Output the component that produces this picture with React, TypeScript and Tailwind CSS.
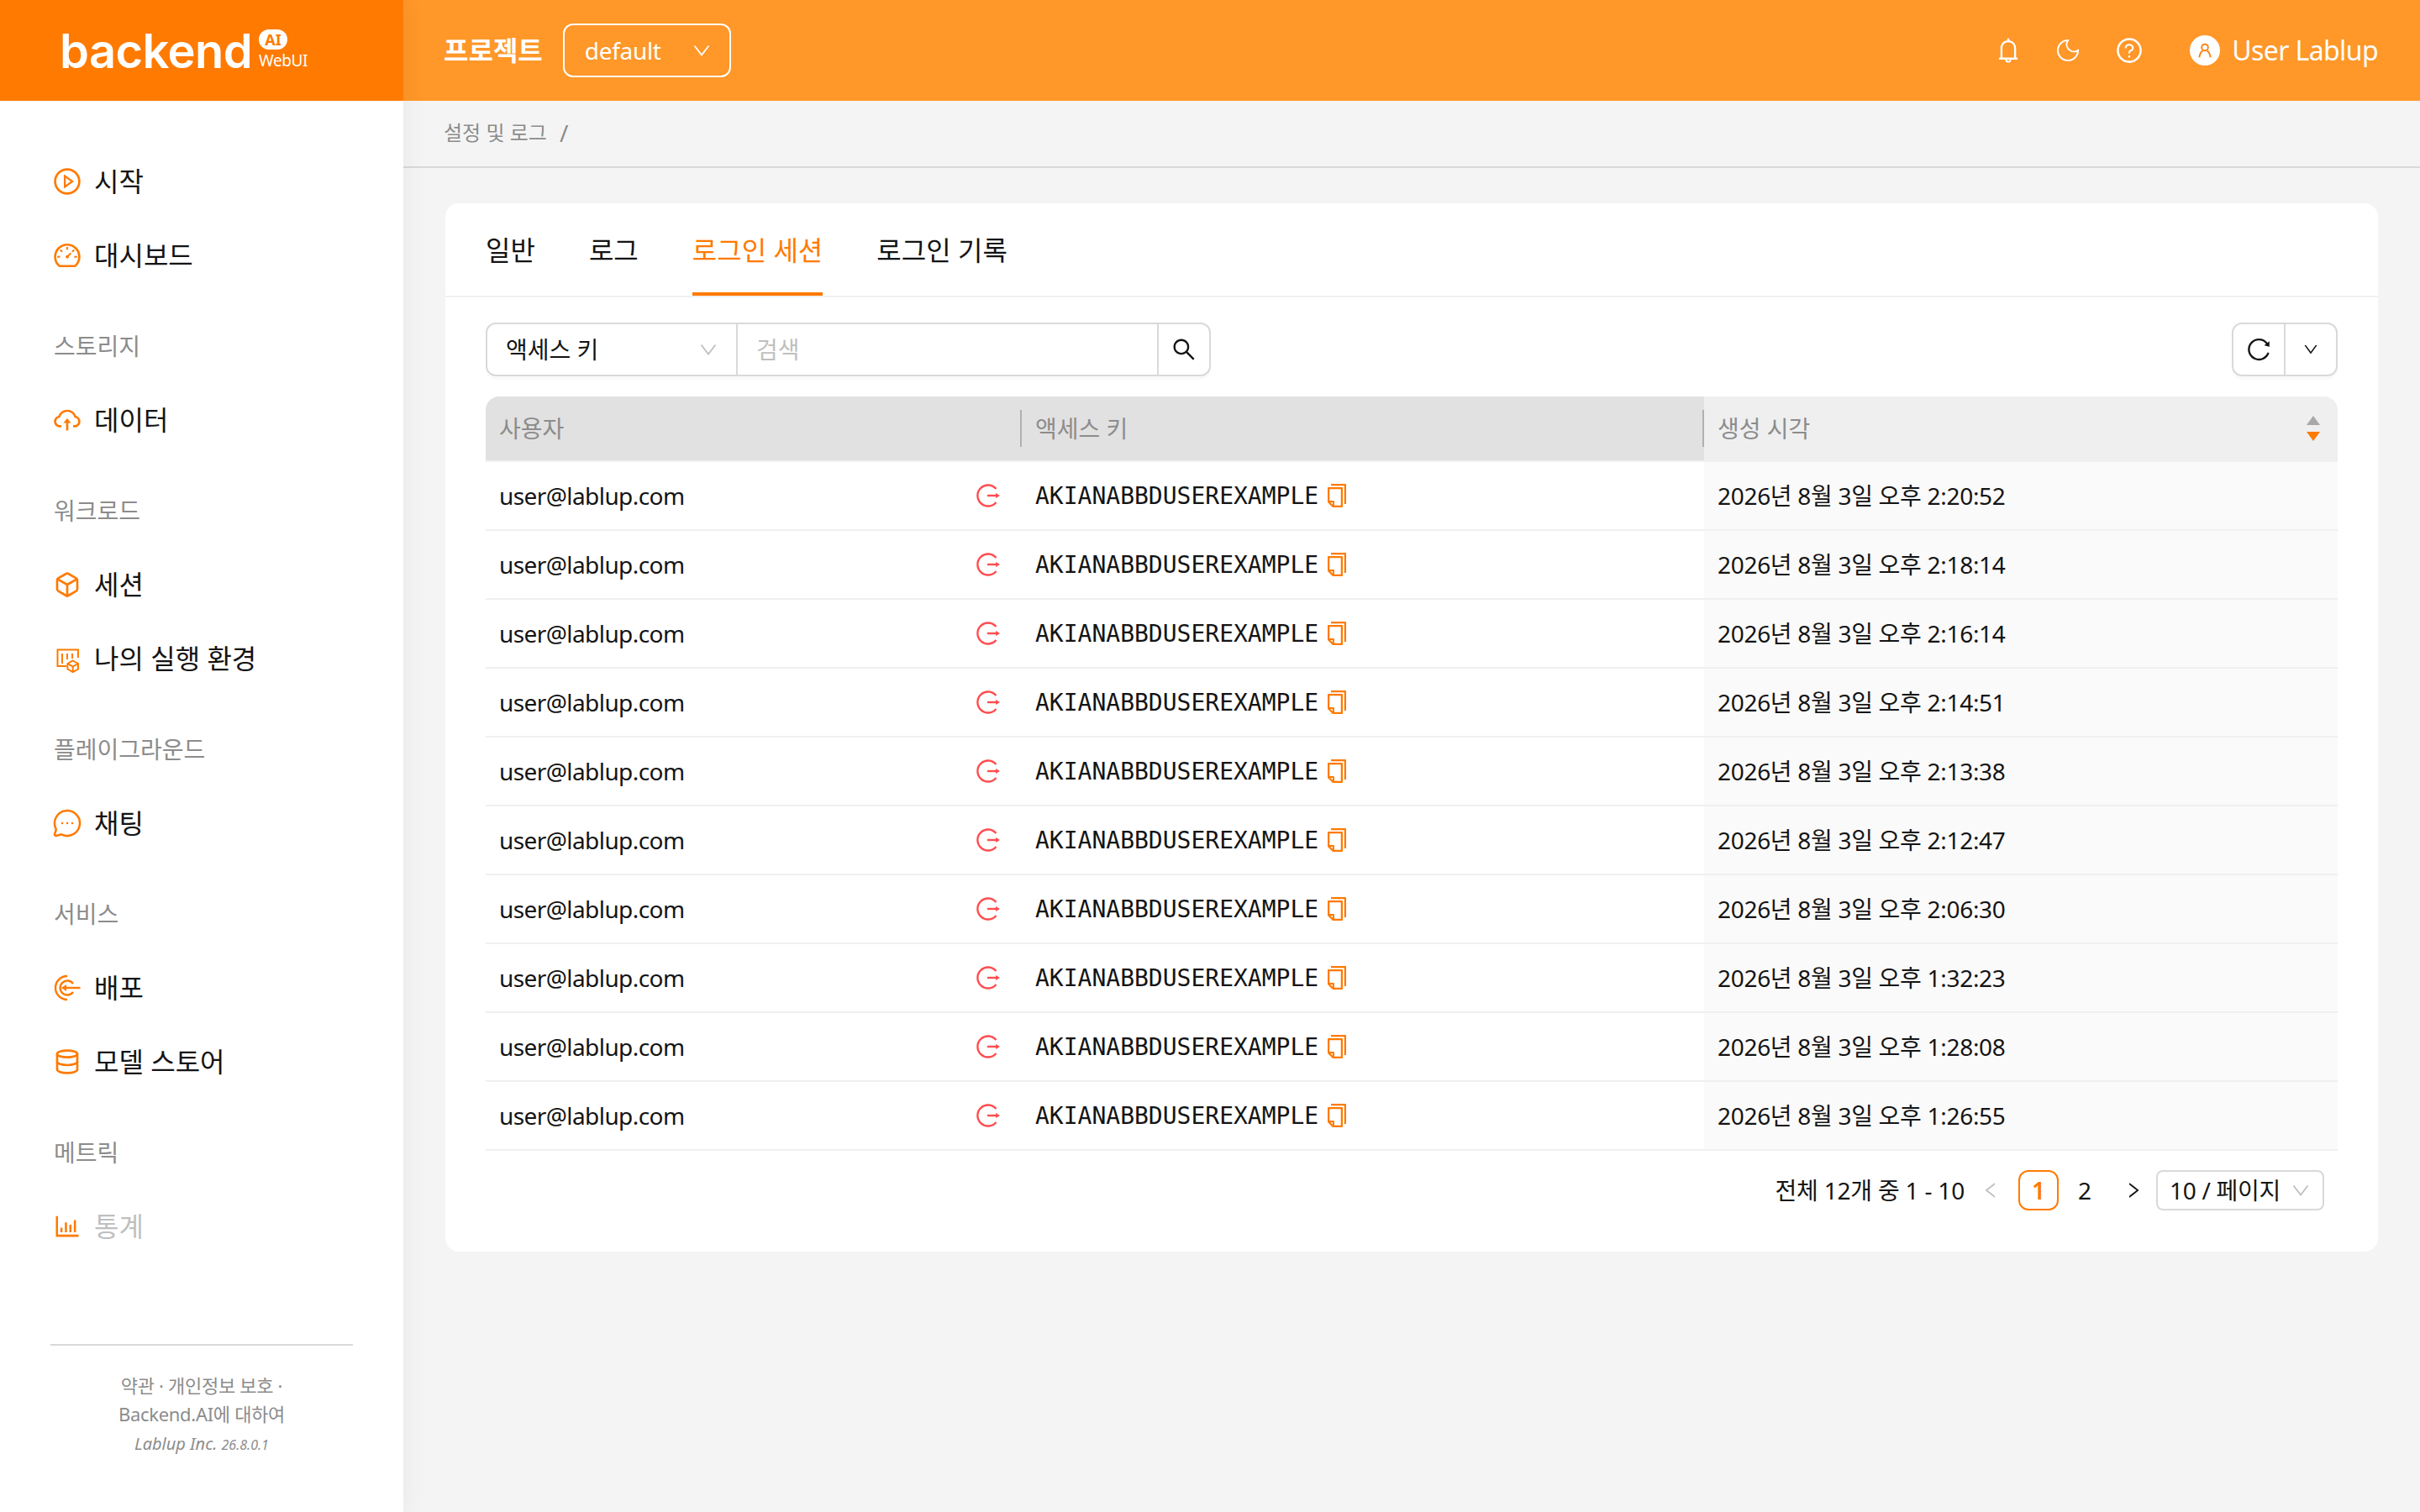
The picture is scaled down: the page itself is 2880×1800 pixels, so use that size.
import type { ReactNode } from "react";
import { Box, Database, MessageCircleMore } from "lucide-react";
import {
  AiOutlineBarChart,
  AiOutlineBell,
  AiOutlineCloudUpload,
  AiOutlineCopy,
  AiOutlineDashboard,
  AiOutlineDown,
  AiOutlineLeft,
  AiOutlinePlayCircle,
  AiOutlineQuestionCircle,
  AiOutlineReload,
  AiOutlineRight,
  AiOutlineSearch,
} from "react-icons/ai";

const times = [
  "2:20:52", "2:18:14", "2:16:14", "2:14:51", "2:13:38",
  "2:12:47", "2:06:30", "1:32:23", "1:28:08", "1:26:55",
];

function Chevron({ color = "#bfbfbf" }: { color?: string }) {
  return (
    <svg viewBox="0 0 22 14" className="w-[22px] h-[14px]" fill="none" stroke={color} strokeWidth="1.800">
      <path d="M2.500 1.500 11 12.500 19.500 1.500" />
    </svg>
  );
}

function EnvIcon() {
  return (
    <svg viewBox="0 0 32 32" className="w-8 h-8 overflow-visible" fill="none" stroke="#ff7a00" strokeWidth="2">
      <path d="M15 25H4.500V5.500H29V15" />
      <path d="M10 10v12M16 10v7M22 10v6" />
      <path d="M22.700 18.500l6.300 3.500v6.500l-6.300 3.500-6.300-3.500V22z" />
      <path d="M16.400 22l6.300 3.500L29 22M22.700 25.500V32" />
    </svg>
  );
}

function DeployIcon() {
  return (
    <svg viewBox="0 0 32 32" className="w-8 h-8" fill="none" stroke="#ff7a00" strokeWidth="2.400">
      <path d="M16 2A14 14 0 0 0 16 30" />
      <path d="M23 11A8.500 8.500 0 1 0 23 21" />
      <path d="M31.500 16H13" />
      <path d="M15 12l-6 4 6 4z" fill="#ff7a00" strokeWidth="0" />
    </svg>
  );
}

function LogoutIcon() {
  return (
    <svg viewBox="0 0 32 32" className="w-8 h-8" fill="none" stroke="#ff4d4f" strokeWidth="2.400">
      <path d="M25.500 8A12.500 12.500 0 1 0 25.500 24" />
      <path d="M15 16h13" />
      <path d="M25 13l5 3-5 3z" fill="#ff4d4f" strokeWidth="0" />
    </svg>
  );
}

function MoonIcon() {
  return (
    <svg viewBox="0 0 24 24" className="w-8 h-8" fill="none" stroke="#fff" strokeWidth="1.500">
      <path d="M12 3a6.500 6.500 0 0 0 9 9 9 9 0 1 1-9-9Z" />
    </svg>
  );
}

function NavItem({ icon, label, muted }: { icon: ReactNode; label: string; muted?: boolean }) {
  return (
    <div className="h-20 mb-2 pl-16 flex items-center">
      <span className="w-8 h-8 flex items-center justify-center text-[36px] text-[#ff7a00] [&>svg]:shrink-0">{icon}</span>
      <span className={"ml-4 text-[32px] " + (muted ? "text-[#bfbfbf]" : "text-[#141414]")}>{label}</span>
    </div>
  );
}

function NavLabel({ children }: { children: ReactNode }) {
  return <div className="h-20 mb-2 mt-7 pl-16 flex items-center text-[28px] text-[#8c8c8c]">{children}</div>;
}

function Sidebar() {
  return (
    <aside className="w-[480px] shrink-0 h-full bg-white flex flex-col z-10 shadow-[0_0_30px_rgba(0,0,0,0.06)]">
      <div className="h-[120px] bg-[#ff7a00] shrink-0 flex items-center pl-[71px] text-white">
        <span className="text-[56px] leading-none font-semibold tracking-[-0.6px] font-['Inter',sans-serif] mt-[2px]">backend</span>
        <div className="ml-[8px] flex flex-col items-start -mt-[2px]">
          <span className="w-[34px] h-6 rounded-full bg-white text-[#ff7a00] text-[18px] leading-none font-bold flex items-center justify-center">AI</span>
          <span className="text-[19px] leading-6 mt-[1px] tracking-[-0.4px]">WebUI</span>
        </div>
      </div>
      <nav className="pt-[56px] flex-1">
        <NavItem icon={<AiOutlinePlayCircle />} label="시작" />
        <NavItem icon={<AiOutlineDashboard />} label="대시보드" />
        <NavLabel>스토리지</NavLabel>
        <NavItem icon={<AiOutlineCloudUpload />} label="데이터" />
        <NavLabel>워크로드</NavLabel>
        <NavItem icon={<Box size={32} strokeWidth={2} />} label="세션" />
        <NavItem icon={<EnvIcon />} label="나의 실행 환경" />
        <NavLabel>플레이그라운드</NavLabel>
        <NavItem icon={<MessageCircleMore size={36} strokeWidth={1.7} />} label="채팅" />
        <NavLabel>서비스</NavLabel>
        <NavItem icon={<DeployIcon />} label="배포" />
        <NavItem icon={<Database size={32} strokeWidth={2} />} label="모델 스토어" />
        <NavLabel>메트릭</NavLabel>
        <NavItem icon={<AiOutlineBarChart />} label="통계" muted />
      </nav>
      <div className="h-[200px] shrink-0 mx-[60px] border-t-2 border-[#d9d9d9] pt-[30px] text-center text-[#8c8c8c] text-[22px] leading-[34px] tracking-[-0.3px]">
        <div>약관 · 개인정보 보호 ·</div>
        <div>Backend.AI에 대하여</div>
        <div className="italic text-[20px] leading-[38px] tracking-normal">
          Lablup Inc. <span className="text-[16px]">26.8.0.1</span>
        </div>
      </div>
    </aside>
  );
}

function TopBar() {
  return (
    <header className="h-[120px] shrink-0 bg-[#ff9729] text-white flex items-center pl-[48px] pr-[50px]">
      <span className="text-[32px] font-bold">프로젝트</span>
      <div className="ml-6 w-[200px] h-16 border-2 border-white rounded-xl flex items-center pl-6 pr-[22px] justify-between text-[28px]">
        <span className="tracking-[-0.3px]">default</span>
        <Chevron color="#ffffff" />
      </div>
      <div className="ml-auto flex items-center">
        <AiOutlineBell className="text-[34px]" />
        <span className="ml-[38px]"><MoonIcon /></span>
        <AiOutlineQuestionCircle className="ml-10 text-[34px]" />
        <div className="ml-[55px] w-9 h-9 rounded-full bg-white flex items-center justify-center">
          <svg viewBox="0 0 20 20" className="w-6 h-6" fill="none" stroke="#ff7a00" strokeWidth="1.500">
            <circle cx="10" cy="7" r="3.200" />
            <path d="M4.500 17c.5-4 2-6 3.500-6.500M15.500 17c-.5-4-2-6-3.500-6.500" />
          </svg>
        </div>
        <span className="ml-[14px] text-[32px] tracking-[-0.6px]">User Lablup</span>
      </div>
    </header>
  );
}

function Row({ time }: { time: string }) {
  return (
    <div className="grid grid-cols-[638px_812px_754px] h-[82px] border-b-2 border-[#f0f0f0] text-[28px] text-[#141414]">
      <div className="flex items-center justify-between pl-4 pr-[24px]">
        <span className="tracking-[-0.58px] mb-[1px]">user@lablup.com</span>
        <LogoutIcon />
      </div>
      <div className="flex items-center pl-4">
        <span className="font-['DejaVu_Sans_Mono',monospace] mt-[2px]">AKIANABBDUSEREXAMPLE</span>
        <AiOutlineCopy className="ml-[6px] text-[32px] text-[#ff7a00]" />
      </div>
      <div className="flex items-center pl-4 pb-[1px] bg-[#fafafa] tracking-[-0.3px]">2026년 8월 3일 오후 {time}</div>
    </div>
  );
}

function LoginSessions() {
  return (
    <div className="mx-[50px] mt-[42px] h-[1248px] bg-white rounded-2xl px-12">
      <div className="-mx-12 px-12 h-[112px] border-b-2 border-[#f0f0f0] flex gap-16 text-[32px] text-[#141414]">
        <div className="h-full flex items-center pt-[1px]">일반</div>
        <div className="h-full flex items-center pt-[1px]">로그</div>
        <div className="h-full flex items-center text-[#ff7a00] border-b-4 border-[#ff7a00] pt-[5px] -mb-[2px]">로그인 세션</div>
        <div className="h-full flex items-center pt-[1px]">로그인 기록</div>
      </div>
      <div className="mt-[30px] flex justify-between">
        <div className="flex w-[863px] h-16 border-2 border-[#d9d9d9] rounded-xl text-[28px] shadow-[0_4px_0_rgba(0,0,0,0.02)]">
          <div className="w-[298px] border-r-2 border-[#d9d9d9] flex items-center justify-between pl-[22px] pr-[22px] text-[#141414]">
            <span>액세스 키</span>
            <Chevron />
          </div>
          <div className="flex-1 flex items-center pl-[22px] text-[#bfbfbf]">검색</div>
          <div className="w-[62px] border-l-2 border-[#d9d9d9] flex items-center justify-center">
            <AiOutlineSearch className="text-[32px] text-[#141414]" />
          </div>
        </div>
        <div className="flex w-[126px] h-16 border-2 border-[#d9d9d9] rounded-xl shadow-[0_4px_0_rgba(0,0,0,0.02)]">
          <div className="w-[62px] border-r-2 border-[#d9d9d9] flex items-center justify-center">
            <AiOutlineReload className="text-[32px] text-[#141414]" />
          </div>
          <div className="flex-1 flex items-center justify-center">
            <AiOutlineDown className="text-[20px] text-[#141414]" />
          </div>
        </div>
      </div>
      <div className="mt-6">
        <div className="grid grid-cols-[638px_812px_754px] h-[78px] border-b-2 border-[#f0f0f0] rounded-t-2xl overflow-hidden text-[28px] text-[#8c8c8c]">
          <div className="bg-[#e1e1e1] flex items-center justify-between pl-4">
            <span>사용자</span>
            <span className="w-[2px] h-[44px] bg-[#b0b0b0]" />
          </div>
          <div className="bg-[#e1e1e1] flex items-center justify-between pl-4">
            <span>액세스 키</span>
            <span className="w-[2px] h-[44px] bg-[#b0b0b0]" />
          </div>
          <div className="bg-[#efefef] flex items-center justify-between pl-4 pr-5">
            <span>생성 시각</span>
            <svg viewBox="0 0 18 32" className="w-[18px] h-8">
              <path d="M9 1l8 11H1z" fill="#a8a8a8" />
              <path d="M9 31L1 20h16z" fill="#ff7a00" />
            </svg>
          </div>
        </div>
        {times.map((t, i) => (
          <Row key={i} time={t} />
        ))}
      </div>
      <div className="mt-[23px] h-12 flex items-center justify-end pr-4 text-[28px] text-[#141414]">
        <span className="tracking-[-0.2px]">전체 12개 중 1 - 10</span>
        <AiOutlineLeft className="ml-[19px] text-[24px] text-[#bfbfbf]" />
        <span className="ml-[21px] w-12 h-12 border-2 border-[#ff7a00] rounded-xl text-[#ff7a00] font-semibold flex items-center justify-center">1</span>
        <span className="w-[62px] text-center">2</span>
        <AiOutlineRight className="ml-[15px] text-[24px]" />
        <div className="ml-[15px] w-[200px] h-12 border-2 border-[#d9d9d9] rounded-lg flex items-center justify-between pl-[14px] pr-[15px]">
          <span className="tracking-[-0.3px]">10 / 페이지</span>
          <Chevron />
        </div>
      </div>
    </div>
  );
}

export default function App() {
  return (
    <div className="flex w-full h-screen bg-[#f4f4f4] font-['Noto_Sans','Noto_Sans_CJK_KR',sans-serif] overflow-hidden">
      <Sidebar />
      <main className="flex-1 min-w-0 flex flex-col">
        <TopBar />
        <div className="h-[80px] shrink-0 border-b-2 border-[#d9d9d9] pl-[48px] pb-[3px] flex items-center text-[24px] text-[#8c8c8c]">
          설정 및 로그<span className="ml-[15px] text-[28px]">/</span>
        </div>
        <LoginSessions />
      </main>
    </div>
  );
}
